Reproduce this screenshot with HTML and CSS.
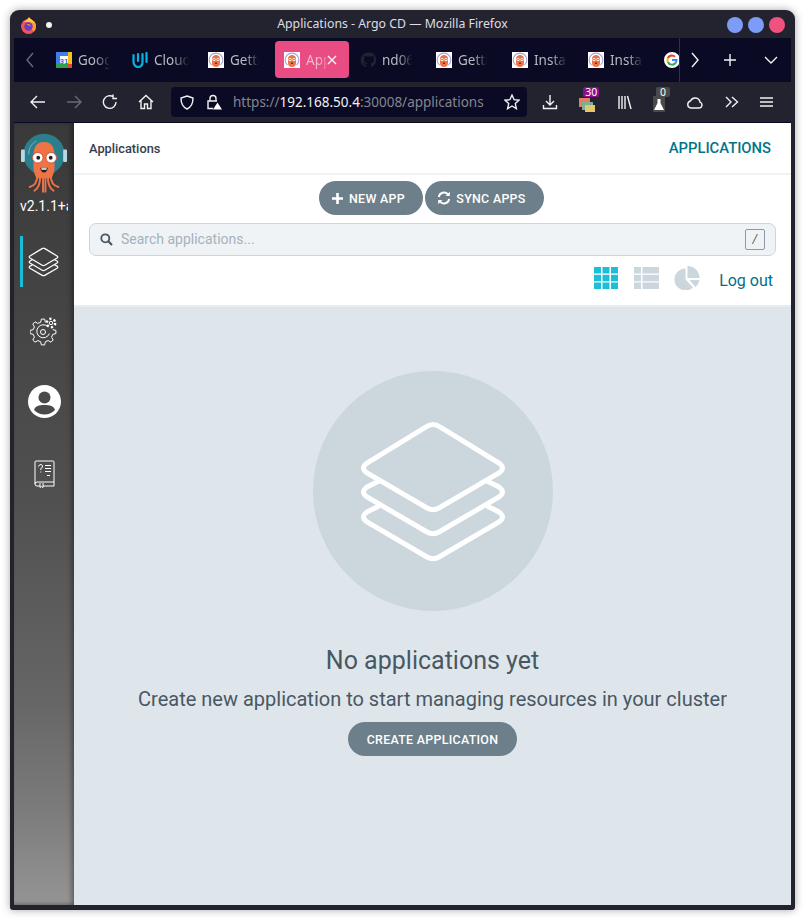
FILE: index.html
```html
<!DOCTYPE html>
<html lang="en">

<head>
    <meta charset="UTF-8">
    <meta name="viewport" content="width=device-width, initial-scale=1.0">
    <title>Applications - Argo CD</title>
    <link rel="stylesheet" href="styles.css">
</head>

<body>
    <svg class="defs" width="0" height="0">
        <symbol id="stack" viewBox="0 0 150 146">
            <path d="M68 8Q75 3 82 8L141 44Q148 49 141 54L81 89Q75 92.5 69 89L9 54Q2 49 9 44Z" />
            <path d="M21 62L9 68Q2 73 9 78L69 113Q75 116.5 81 113L141 78Q148 73 141 68L129 62" />
            <path d="M21 87L9 93Q2 98 9 103L69 138Q75 141.5 81 138L141 103Q148 98 141 93L129 87" />
        </symbol>
        <symbol id="argo" viewBox="0 0 48 62">
            <circle cx="24" cy="22" r="21.500" fill="#2b7f8c" />
            <path d="M8 22A16 16 0 0 1 16 8" fill="none" stroke="#7db5bc" />
            <rect x="0" y="17" width="4" height="13" rx="1" fill="#b9d6e4" />
            <rect x="44" y="17" width="4" height="13" rx="1" fill="#b9d6e4" />
            <path d="M13 24C13 13 17 9 24 9S35 13 35 24V36C35 41 33 44 32 47H16C15 44 13 41 13 36Z" fill="#ee7445" />
            <path d="M17 44C17 52 13 55 9 56M20 45C20 53 17 58 14 60M23 45V61M25.500 45V61M28 45C28 53 31 58 34 60M31 44C31 52 35 55 39 56" fill="none" stroke="#ee7445" stroke-width="2" stroke-linecap="round" />
            <circle cx="17.500" cy="25.500" r="5.500" fill="#fff" stroke="#d9503a" />
            <circle cx="31.500" cy="25.500" r="5.500" fill="#fff" stroke="#d9503a" />
            <circle cx="18" cy="25.500" r="2" fill="#222" />
            <circle cx="31" cy="25.500" r="2" fill="#222" />
            <path d="M20 36Q24 37 28 36Q27 41 24 41T20 36Z" fill="#222" />
            <path d="M21 36.500H27L26.500 38H21.500Z" fill="#fff" />
        </symbol>
        <symbol id="argo-fav" viewBox="0 0 16 16">
            <rect width="16" height="16" fill="#fff" />
            <path d="M3.500 13A6.800 6.800 0 1 1 12.500 13" fill="none" stroke="#a9a2dc" stroke-width="1.200" />
            <path d="M4 7C4 4 6 3 8 3S12 4 12 7V11C12 13 11 15 8 15S4 13 4 11Z" fill="#ee7445" />
            <circle cx="6" cy="7.500" r="1.500" fill="#fff" />
            <circle cx="10" cy="7.500" r="1.500" fill="#fff" />
            <circle cx="6" cy="7.500" r=".6" fill="#222" />
            <circle cx="10" cy="7.500" r=".6" fill="#222" />
            <rect x="7" y="10.500" width="2" height="1.500" fill="#7a2c1a" />
        </symbol>
    </svg>

    <div class="window">
        <div class="titlebar">
            <svg class="ff-logo" width="17" height="17" viewBox="0 0 17 17">
                <circle cx="8.500" cy="9.500" r="7.500" fill="#f0555a" />
                <path d="M8.500 2A7.500 7.500 0 0 1 16 9.500C16 12 15 13.500 14 14.500L9 9Z" fill="#ff9a2e" />
                <path d="M3 5C5 4.500 7 3 9 0C10 2 15 4 16 9C15 6.500 13 5 11 5Z" fill="#ffc93a" />
                <circle cx="8.500" cy="9.500" r="4.200" fill="#6a3dc4" />
                <path d="M6 8C8 6.500 10 7 11 9C9 8 7.500 8 6 8Z" fill="#ffb02e" />
            </svg>
            <span class="title-dot"></span>
            <div class="title-text">Applications - Argo CD — Mozilla Firefox</div>
            <div class="win-btns">
                <span class="win-btn"></span>
                <span class="win-btn"></span>
                <span class="win-btn close"></span>
            </div>
        </div>

        <div class="tabbar">
            <div class="tab-strip">
                <div class="tab-arrow">
                    <svg width="10" height="16" viewBox="0 0 10 16"><path class="line dim" d="M8 1L2 8L8 15" /></svg>
                </div>
                <div class="tab">
                    <svg class="fav" viewBox="0 0 16 16">
                        <rect width="16" height="16" rx="1" fill="#fff" />
                        <path d="M0 0H12V4H4V13H0Z" fill="#3f7fe8" />
                        <rect y="12" width="12" height="4" fill="#2aa24e" />
                        <rect x="12" y="0" width="4" height="12" fill="#f7c11c" />
                        <rect x="12" y="12" width="4" height="4" fill="#e9442f" />
                        <text x="8" y="11.500" class="cal-num">31</text>
                    </svg>
                    <span class="tab-label">Goog</span>
                </div>
                <div class="tab">
                    <svg class="fav" viewBox="0 0 16 16">
                        <path d="M1.500 3V10C1.500 13 4 15 6 15S10 14 10.500 11V2M6 2V9M14.500 1V10" fill="none" stroke="#02b3e4" stroke-width="2.200" stroke-linecap="round" />
                    </svg>
                    <span class="tab-label">Cloud</span>
                </div>
                <div class="tab">
                    <svg class="fav"><use href="#argo-fav" /></svg>
                    <span class="tab-label">Getti</span>
                </div>
                <div class="tab active">
                    <svg class="fav"><use href="#argo-fav" /></svg>
                    <span class="tab-label">App</span>
                    <svg class="tab-close" width="10" height="10" viewBox="0 0 10 10"><path class="line" d="M1 1L9 9M9 1L1 9" /></svg>
                </div>
                <div class="tab">
                    <svg class="fav" viewBox="0 0 16 16">
                        <path d="M8 .5A7.500 7.500 0 0 0 5.600 15C6 15 6 14.800 6 14.500V13C4 13.400 3.500 12 3.300 11.500C3 11 2.400 10.500 3.300 10.500C4 10.600 4.500 11.300 4.700 11.600C5.500 12.800 6.500 12.500 7 12.300C7 11.800 7.300 11.400 7.500 11.200C5.500 11 4 10 4 7.800C4 7 4.300 6.300 4.700 5.800C4.600 5.500 4.400 4.700 4.800 3.800C4.800 3.800 5.500 3.600 7 4.600C8.300 4.300 9.700 4.300 11 4.600C12.500 3.600 13.200 3.800 13.200 3.800C13.600 4.700 13.400 5.500 13.300 5.800C13.700 6.300 14 7 14 7.800C14 10 12.500 11 10.500 11.200C10.800 11.500 11 12 11 12.700V14.500C11 14.800 11 15 11.400 15A7.500 7.500 0 0 0 8 .5Z" fill="#23232f" />
                    </svg>
                    <span class="tab-label">nd06</span>
                </div>
                <div class="tab">
                    <svg class="fav"><use href="#argo-fav" /></svg>
                    <span class="tab-label">Getti</span>
                </div>
                <div class="tab">
                    <svg class="fav"><use href="#argo-fav" /></svg>
                    <span class="tab-label">Instal</span>
                </div>
                <div class="tab">
                    <svg class="fav"><use href="#argo-fav" /></svg>
                    <span class="tab-label">Instal</span>
                </div>
                <div class="tab">
                    <svg class="fav" viewBox="0 0 16 16">
                        <circle cx="8" cy="8" r="8" fill="#fff" />
                        <path d="M8 3.500A4.500 4.500 0 0 1 11 4.700" fill="none" stroke="#ea4335" stroke-width="2" />
                        <path d="M8 3.500A4.500 4.500 0 0 0 3.900 10" fill="none" stroke="#fbbc05" stroke-width="2" />
                        <path d="M3.900 6A4.500 4.500 0 0 1 8 3.500" fill="none" stroke="#ea4335" stroke-width="2" />
                        <path d="M3.900 10A4.500 4.500 0 0 0 11.500 11" fill="none" stroke="#34a853" stroke-width="2" />
                        <path d="M8 8H12.500C12.500 9.300 12.200 10.300 11.500 11" fill="none" stroke="#4285f4" stroke-width="2" />
                    </svg>
                </div>
            </div>
            <div class="tab-tools">
                <svg class="tool-right" width="10" height="16" viewBox="0 0 10 16"><path class="line" d="M2 1L8 8L2 15" /></svg>
                <svg class="tool-plus" width="14" height="14" viewBox="0 0 14 14"><path class="line" d="M7 1V13M1 7H13" /></svg>
                <svg class="tool-down" width="14" height="10" viewBox="0 0 14 10"><path class="line" d="M1 2L7 8L13 2" /></svg>
            </div>
        </div>

        <div class="navbar">
            <div class="nav-left">
                <svg width="16" height="14" viewBox="0 0 16 14"><path class="line" d="M15 7H1M7 1L1 7L7 13" /></svg>
                <svg class="off" width="16" height="14" viewBox="0 0 16 14"><path class="line" d="M1 7H15M9 1L15 7L9 13" /></svg>
                <svg width="16" height="16" viewBox="0 0 16 16"><path class="line" d="M14 8A6.300 6.300 0 1 1 11.500 3M11 .5V4.500H15" /></svg>
                <svg width="16" height="16" viewBox="0 0 16 16"><path class="line" d="M1 8L8 1.500L15 8M3 6.500V14.500H6.500V10H9.500V14.500H13V6.500" /></svg>
            </div>
            <div class="urlbar">
                <svg class="url-shield" width="14" height="15" viewBox="0 0 14 15"><path class="line" d="M7 1L13 3C13 8 11.500 12 7 14C2.500 12 1 8 1 3Z" /></svg>
                <svg class="url-lock" width="16" height="16" viewBox="0 0 16 16">
                    <path class="line" d="M4 7V4.500A3 3 0 0 1 10 4.500V7M7 14.500H2V7H11" />
                    <path d="M11.500 8.500L16 15.500H7Z" fill="#fff" />
                </svg>
                <div class="url-text">https://<span class="url-host">192.168.50.4</span>:30008/applications</div>
                <svg class="url-star" width="16" height="16" viewBox="0 0 16 16"><path class="line" d="M8 1L10.100 5.700L15 6.200L11.300 9.600L12.400 14.700L8 12L3.600 14.700L4.700 9.600L1 6.200L5.900 5.700Z" /></svg>
            </div>
            <div class="nav-right">
                <svg width="16" height="16" viewBox="0 0 16 16"><path class="line" d="M8 1V10.500M4 7L8 11L12 7M1.500 11V14.500H14.500V11" /></svg>
                <div class="ext">
                    <svg width="17" height="17" viewBox="0 0 17 17">
                        <rect x="0" y="2" width="11" height="9" fill="#e2805d" />
                        <rect x="3" y="6" width="11" height="8" fill="#7fae92" />
                        <rect x="6" y="9" width="10" height="7" fill="#e3c76b" />
                    </svg>
                    <span class="badge purple">30</span>
                </div>
                <svg width="14" height="15" viewBox="0 0 14 15"><path class="line" d="M1 1V14M4 1V14M7 1V14M9.500 1L13 14" /></svg>
                <div class="ext">
                    <svg width="12" height="16" viewBox="0 0 12 16">
                        <rect width="12" height="16" rx="1" fill="#4a4a4a" />
                        <path d="M4.500 3H7.500V7L11 14H1L4.500 7Z" fill="#fff" />
                    </svg>
                    <span class="badge gray">0</span>
                </div>
                <svg width="17" height="13" viewBox="0 0 17 13"><path class="line" d="M4.500 12H13A3 3 0 0 0 14 6.200A5 5 0 0 0 4.500 5A3.600 3.600 0 0 0 4.500 12Z" /></svg>
                <svg width="14" height="12" viewBox="0 0 14 12"><path class="line" d="M1 1L6 6L1 11M7 1L12.500 6L7 11" /></svg>
                <svg width="13" height="10" viewBox="0 0 13 10"><path class="line" d="M0 1H13M0 5H13M0 9H13" /></svg>
            </div>
        </div>

        <div class="app">
            <aside class="sidebar">
                <svg class="logo"><use href="#argo" /></svg>
                <div class="version">v2.1.1+a</div>
                <div class="side-item active">
                    <svg class="side-stack"><use href="#stack" /></svg>
                </div>
                <div class="side-item">
                    <svg width="29" height="29" viewBox="0 0 29 29">
                        <path class="thin" transform="translate(13 15)" d="M9.700-2.400L12.900-1.600 12.900 1.600 9.700 2.400 8.600 5.200 10.200 8 8 10.200 5.200 8.600 2.400 9.700 1.600 12.900-1.600 12.900-2.400 9.700-5.200 8.600-8 10.200-10.200 8-8.600 5.200-9.700 2.400-12.900 1.600-12.900-1.600-9.700-2.400-8.600-5.200-10.200-8-8-10.200-5.200-8.600-2.400-9.700-1.600-12.900 1.600-12.900 2.400-9.700" />
                        <path class="thin" d="M18 9.800A6.500 6.500 0 1 0 19.400 16.500" />
                        <circle class="thin" cx="13" cy="15" r="2.500" />
                        <circle class="gear-teeth" cx="21" cy="6" r="4.200" />
                        <circle class="thin" cx="21" cy="6" r="1.700" />
                    </svg>
                </div>
                <div class="side-item">
                    <svg width="33" height="33" viewBox="0 0 33 33">
                        <circle cx="16.500" cy="16.500" r="16.500" fill="#fff" />
                        <circle cx="16.500" cy="12.500" r="6" fill="#4a4a4a" />
                        <path d="M6 25C7 21 11 20 16.500 20S26 21 27 25C24 28 20 29.500 16.500 29.500S9 28 6 25Z" fill="#4a4a4a" />
                    </svg>
                </div>
                <div class="side-item book">
                    <svg width="21" height="28" viewBox="0 0 21 28">
                        <path class="thin" d="M1 2Q1 1 2 1H19Q20 1 20 2V22H3Q1 22 1 24ZM1 24Q1 26 3 26H6M9 26H20V22M6 23V27.500L7.500 26.500L9 27.500V23" />
                        <path class="thin" d="M4.500 6.500Q5 4.500 7 4.500Q9 5 8.500 7Q8 8 6.800 8.500V10M6.800 11.500V12.500M11 5.500H17M11 8.500H17M11 11.500H17M13 15.500H16" />
                    </svg>
                </div>
            </aside>

            <main class="main">
                <header class="topbar">
                    <div class="crumb">Applications</div>
                    <div class="page-name">APPLICATIONS</div>
                </header>

                <section class="toolbar">
                    <div class="actions">
                        <button class="btn new-app">
                            <svg width="13" height="13" viewBox="0 0 13 13"><path d="M6.500 1V12M1 6.500H12" fill="none" stroke="#fff" stroke-width="2.600" /></svg>
                            NEW APP
                        </button>
                        <button class="btn sync-apps">
                            <svg width="14" height="14" viewBox="0 0 14 14">
                                <path d="M1.800 6A5.300 5.300 0 0 1 11 3.300M12.200 8A5.300 5.300 0 0 1 3 10.700" fill="none" stroke="#fff" stroke-width="1.900" />
                                <path d="M12.800 .8V5H8.600ZM1.200 13.200V9H5.400Z" fill="#fff" />
                            </svg>
                            SYNC APPS
                        </button>
                    </div>
                    <div class="search">
                        <svg width="13" height="13" viewBox="0 0 13 13"><circle cx="5.300" cy="5.300" r="4" fill="none" stroke="#495763" stroke-width="1.800" /><path d="M8.300 8.300L12 12" stroke="#495763" stroke-width="2.200" /></svg>
                        <span class="placeholder">Search applications...</span>
                        <span class="kbd">/</span>
                    </div>
                    <div class="views">
                        <svg class="view" width="24" height="22" viewBox="0 0 24 22" fill="#1cbfd6">
                            <rect width="7" height="6.500" /><rect x="8.500" width="7" height="6.500" /><rect x="17" width="7" height="6.500" />
                            <rect y="7.800" width="7" height="6.500" /><rect x="8.500" y="7.800" width="7" height="6.500" /><rect x="17" y="7.800" width="7" height="6.500" />
                            <rect y="15.500" width="7" height="6.500" /><rect x="8.500" y="15.500" width="7" height="6.500" /><rect x="17" y="15.500" width="7" height="6.500" />
                        </svg>
                        <svg class="view view-list" width="25" height="22" viewBox="0 0 25 22" fill="#ccd6dd">
                            <rect width="7" height="6.500" /><rect x="8.500" width="16.500" height="6.500" />
                            <rect y="7.800" width="7" height="6.500" /><rect x="8.500" y="7.800" width="16.500" height="6.500" />
                            <rect y="15.500" width="7" height="6.500" /><rect x="8.500" y="15.500" width="16.500" height="6.500" />
                        </svg>
                        <svg class="view" width="26" height="24" viewBox="0 0 26 24" fill="#ccd6dd">
                            <path d="M11.500 2.500V13.500L19 21.500A11 11 0 1 1 11.500 2.500Z" />
                            <path d="M13.500 0A12 12 0 0 1 25.500 12H13.500Z" />
                            <path d="M15.500 14H25.500A11 11 0 0 1 21.500 21Z" />
                        </svg>
                        <a class="logout">Log out</a>
                    </div>
                </section>

                <section class="empty">
                    <div class="empty-circle">
                        <svg class="empty-stack"><use href="#stack" /></svg>
                    </div>
                    <h2 class="empty-title">No applications yet</h2>
                    <p class="empty-text">Create new application to start managing resources in your cluster</p>
                    <button class="btn create">CREATE APPLICATION</button>
                </section>
            </main>
        </div>
    </div>
</body>

</html>
```

FILE: styles.css
```css
* {
    box-sizing: border-box;
}

html, body {
    margin: 0;
    height: 100%;
    background: #fff;
    overflow: hidden;
}

.defs {
    position: absolute;
}

.line {
    fill: none;
    stroke: #f2f2f4;
    stroke-width: 1.4;
}

.line.dim {
    stroke: #6b6b78;
}

.thin {
    fill: none;
    stroke: #fff;
    stroke-width: 1;
}

.gear-teeth {
    fill: none;
    stroke: #fff;
    stroke-width: 2.400;
    stroke-dasharray: 2.200 2.200;
}

.window {
    display: flex;
    flex-direction: column;
    width: 785px;
    height: 900px;
    margin: 10px 0 0 10px;
    padding: 0 4px 5px;
    background: #23232f;
    border-radius: 9px 9px 3px 3px;
    box-shadow: 0 0 9px rgba(0, 0, 0, 0.35);
    font-family: "Noto Sans", sans-serif;
}

/* firefox chrome */
.titlebar {
    position: relative;
    display: flex;
    align-items: center;
    flex: 0 0 28px;
    margin: 0 -4px;
    padding: 2px 10px 0 10px;
}

.ff-logo {
    flex: none;
}

.title-dot {
    width: 6px;
    height: 6px;
    margin-left: 9px;
    background: #f4f4f4;
    border-radius: 50%;
}

.title-text {
    position: absolute;
    left: 0;
    right: 20px;
    top: 5px;
    text-align: center;
    color: #dedee2;
    font-size: 12.300px;
    line-height: 18px;
}

.win-btns {
    display: flex;
    gap: 5px;
    margin-left: auto;
}

.win-btn {
    width: 16px;
    height: 16px;
    background: #7c9cf8;
    border-radius: 50%;
}

.win-btn.close {
    background: #f0517f;
}

.tabbar {
    display: flex;
    flex: 0 0 44px;
    background: #0a0a24;
}

.tab-strip {
    display: flex;
    flex: 0 0 666px;
    overflow: hidden;
    border-right: 1px solid #33333f;
}

.tab-arrow {
    display: flex;
    flex: 0 0 32px;
    align-items: center;
    padding-left: 11px;
}

.tab {
    display: flex;
    flex: 0 0 74px;
    align-items: center;
    gap: 6px;
    height: 37px;
    margin: 3px 1px;
    padding-left: 9px;
    border-radius: 4px;
    position: relative;
}

.tab.active {
    background: #e94c82;
}

.fav {
    flex: none;
    width: 16px;
    height: 16px;
}

.cal-num {
    font-family: "Liberation Sans", sans-serif;
    font-size: 8px;
    font-weight: 700;
    fill: #2f6fd8;
    text-anchor: middle;
}

.tab-label {
    white-space: nowrap;
    color: #b9b9c0;
    font-size: 13.500px;
    -webkit-mask-image: linear-gradient(90deg, #000 50%, transparent 95%);
    mask-image: linear-gradient(90deg, #000 50%, transparent 95%);
}

.tab.active .tab-label {
    color: #f6b9cd;
}

.tab-close {
    position: absolute;
    right: 12px;
    top: 14px;
}

.tab-tools {
    display: flex;
    flex: 1;
    align-items: center;
    padding-left: 10px;
}

.tool-plus {
    margin-left: 23px;
}

.tool-down {
    margin-left: 27px;
}

.navbar {
    display: flex;
    flex: 0 0 41px;
    align-items: center;
    border-bottom: 1px solid #0a0a24;
}

.nav-left {
    display: flex;
    flex: 0 0 157px;
    align-items: center;
    gap: 20px;
    padding-left: 16px;
}

.off .line {
    stroke: #6b6b78;
}

.urlbar {
    display: flex;
    align-items: center;
    width: 356px;
    height: 30px;
    background: #0a0a24;
    border-radius: 4px;
}

.url-shield {
    margin-left: 9px;
}

.url-lock {
    margin-left: 12px;
}

.url-text {
    margin-left: 11px;
    color: #85858f;
    font-size: 13.500px;
    white-space: nowrap;
}

.url-host {
    color: #f2f2f4;
}

.url-star {
    margin-left: auto;
    margin-right: 7px;
}

.nav-right {
    display: flex;
    flex: 1;
    align-items: center;
    justify-content: space-between;
    padding: 0 18px 0 15px;
}

.ext {
    position: relative;
    display: flex;
    margin-top: 4px;
}

.badge {
    position: absolute;
    top: -9px;
    left: 4px;
    color: #fff;
    font-size: 10.500px;
    line-height: 10px;
    border-radius: 2px;
}

.badge.purple {
    padding: 0 2px;
    background: #8a0f8a;
}

.badge.gray {
    left: 3px;
    padding: 0 4px;
    background: #4a4a4a;
}

/* argo cd page */
.app {
    display: flex;
    flex: 1;
    min-height: 0;
    font-family: Roboto, sans-serif;
}

.sidebar {
    display: flex;
    flex-direction: column;
    align-items: center;
    flex: 0 0 60px;
    padding-top: 10px;
    overflow: hidden;
    background: linear-gradient(180deg, #393939 0%, #505050 48%, #666 74%, #7a7a7a 87%, #949494 100%);
    box-shadow: inset -4px 0 4px -1px rgba(0, 0, 0, 0.3), inset 0 -3px 3px -1px rgba(0, 0, 0, 0.15);
}

.logo {
    flex: none;
    width: 46px;
    height: 60px;
}

.version {
    width: 48px;
    margin-top: 5px;
    overflow: hidden;
    white-space: nowrap;
    color: #fff;
    font-size: 14px;
    line-height: 16px;
}

.side-item {
    display: flex;
    align-items: center;
    justify-content: center;
    align-self: stretch;
    height: 52px;
    padding-top: 1px;
}

.side-item + .side-item {
    margin-top: 18px;
}

.side-item + .side-item.book {
    margin-top: 20px;
}

.side-item.active {
    height: 51px;
    margin: 22px 0 0 6px;
    padding: 0 13px 0 2px;
    border-left: 3px solid #18bed4;
}

.side-stack {
    width: 31px;
    height: 30px;
    fill: none;
    stroke: #fff;
    stroke-width: 6;
}

.main {
    display: flex;
    flex-direction: column;
    flex: 1;
    min-width: 0;
    background: #dee6eb;
}

.topbar {
    display: flex;
    align-items: center;
    justify-content: space-between;
    flex: 0 0 52px;
    padding: 0 20px 0 15px;
    background: #fff;
    border-bottom: 2px solid #eff3f5;
}

.crumb {
    color: #363c4a;
    font-size: 12.800px;
    font-weight: 500;
}

.page-name {
    color: #00758a;
    font-size: 14.800px;
    font-weight: 500;
}

.toolbar {
    flex: 0 0 132px;
    padding: 6px 15px 0;
    background: #fff;
    border-bottom: 2px solid #e6ecf0;
}

.actions {
    display: flex;
    justify-content: center;
    gap: 2px;
    padding-right: 3px;
}

.btn {
    display: inline-flex;
    align-items: center;
    justify-content: center;
    gap: 5px;
    height: 34px;
    padding: 0 5px 0 0;
    border: none;
    border-radius: 17px;
    background: #6d7f8b;
    color: #fff;
    font-family: Roboto, sans-serif;
    font-size: 12.400px;
    font-weight: 500;
    letter-spacing: 0.3px;
    white-space: nowrap;
}

.btn.new-app {
    width: 104px;
}

.btn.sync-apps {
    width: 119px;
}

.search {
    display: flex;
    align-items: center;
    height: 33px;
    margin-top: 8px;
    padding: 0 10px;
    background: #eff3f5;
    border: 1px solid #ccd6dd;
    border-radius: 7px;
}

.placeholder {
    margin: 0 0 2px 8px;
    color: #a5b2bc;
    font-size: 14px;
}

.kbd {
    width: 20px;
    height: 21px;
    margin-left: auto;
    border: 1px solid #8b9aa5;
    border-radius: 2px;
    color: #495763;
    font-size: 12px;
    font-style: italic;
    line-height: 19px;
    text-align: center;
}

.views {
    display: flex;
    align-items: center;
    justify-content: flex-end;
    gap: 16px;
    height: 24px;
    margin-top: 10px;
    padding-right: 3px;
}

.view-list {
    margin-right: -1px;
}

.logout {
    margin: 4px 0 0 3px;
    color: #00708a;
    font-size: 16px;
}

.empty {
    display: flex;
    flex-direction: column;
    align-items: center;
    padding-top: 64px;
}

.empty-circle {
    display: flex;
    align-items: center;
    justify-content: center;
    width: 240px;
    height: 240px;
    background: #ccd6dd;
    border-radius: 50%;
}

.empty-stack {
    width: 150px;
    height: 146px;
    margin-top: 1px;
    fill: none;
    stroke: #fff;
    stroke-width: 5;
}

.empty-title {
    margin: 33px 0 0;
    color: #495763;
    font-size: 25px;
    font-weight: 400;
    line-height: 34px;
}

.empty-text {
    margin: 7px 0 0;
    color: #495763;
    font-size: 20px;
    line-height: 28px;
}

.btn.create {
    width: 169px;
    margin-top: 9px;
    padding: 0;
}
```
